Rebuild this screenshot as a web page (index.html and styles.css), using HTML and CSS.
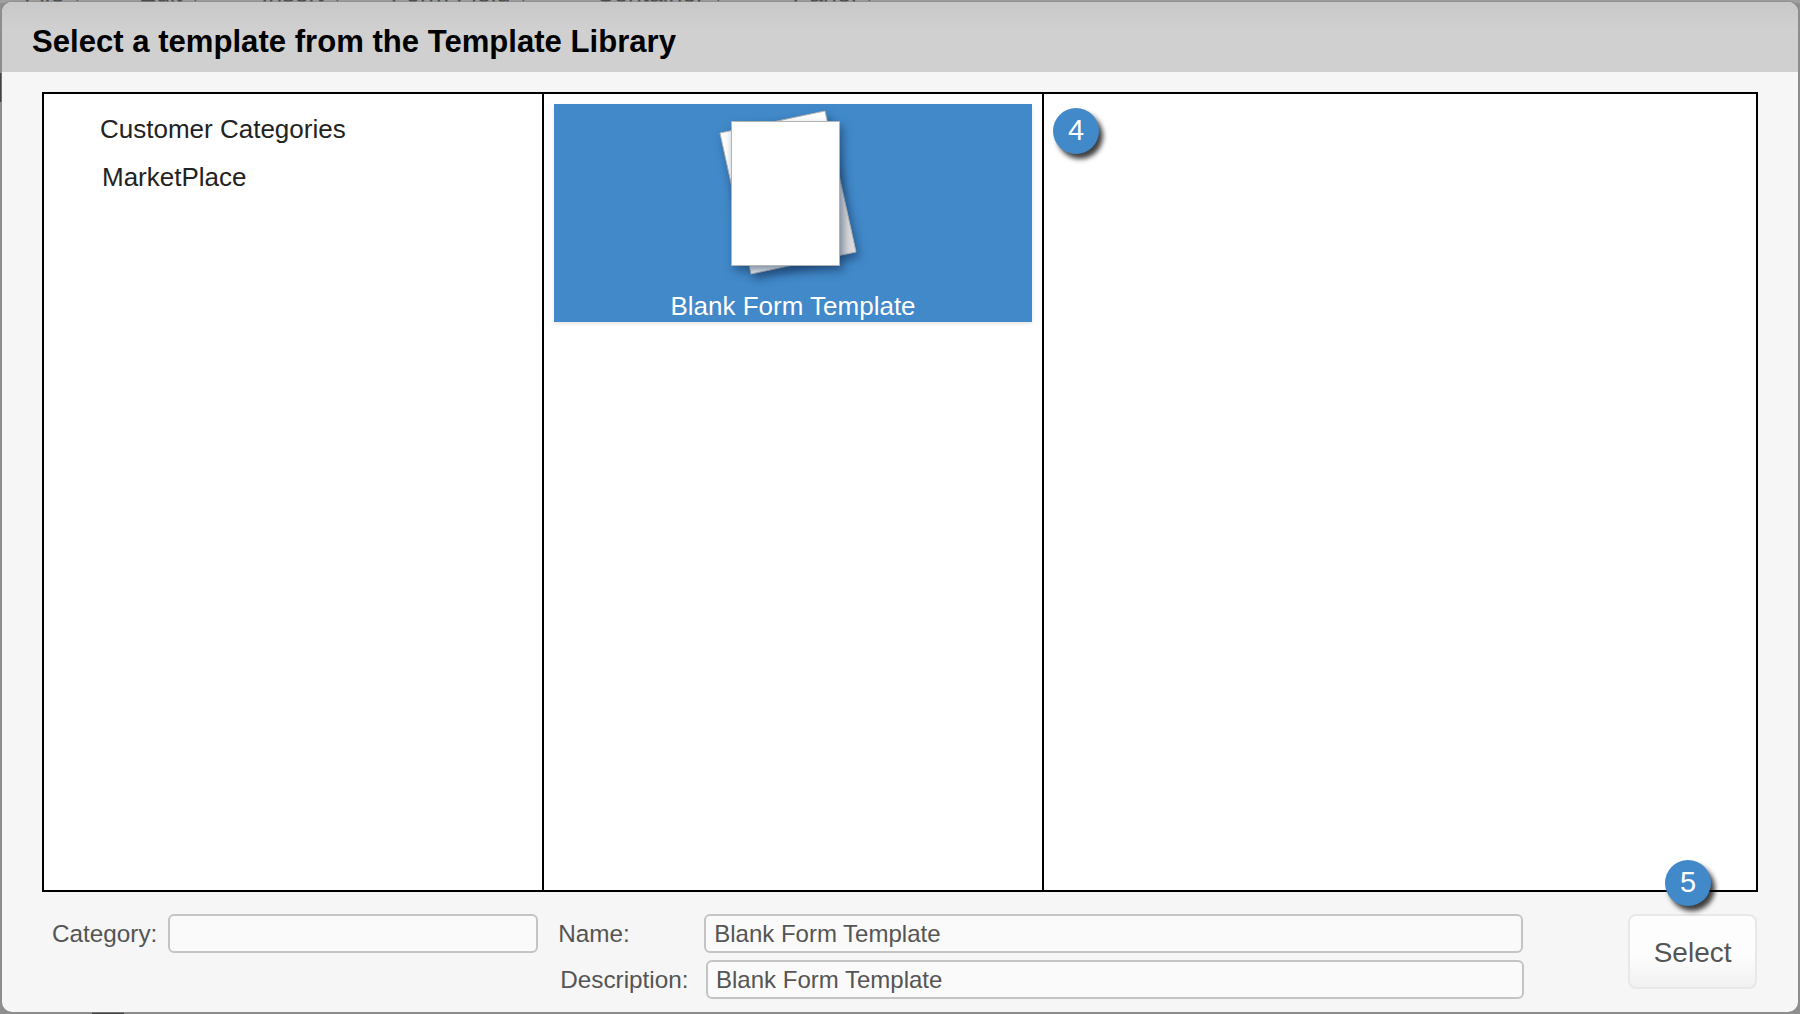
FILE: index.html

```html
<!DOCTYPE html>
<html lang="en">
<head>
    <meta charset="UTF-8">
    <title>Select a template</title>
    <link rel="stylesheet" href="styles.css">
</head>
<body>
    <div class="menubar">
        <span class="menu-file">File ▾</span>
        <span class="menu-edit">Edit ▾</span>
        <span class="menu-insert">Insert ▾</span>
        <span class="menu-field">Form Field ▾</span>
        <span class="menu-container">Container ▾</span>
        <span class="menu-panel">Panel ▾</span>
    </div>
    <div class="backdrop-mark mark-left"></div>
    <div class="backdrop-mark mark-bottom"></div>

    <div class="modal">
        <div class="modal-header">Select a template from the Template Library</div>

        <div class="panels">
            <div class="panel panel-categories">
                <div class="category">Customer Categories</div>
                <div class="category category-second">MarketPlace</div>
            </div>
            <div class="panel panel-templates">
                <div class="template-card">
                    <svg class="template-icon" width="478" height="186" viewBox="0 0 478 186">
                        <defs>
                            <linearGradient id="backPage" x1="0" y1="0" x2="1" y2="0.5">
                                <stop offset="0.7" stop-color="#ffffff"/>
                                <stop offset="1" stop-color="#dcdcdc"/>
                            </linearGradient>
                        </defs>
                        <polygon class="page" points="166,29 271,7 302,148 197,170" fill="url(#backPage)"/>
                        <rect class="page" x="177.500" y="17.500" width="108" height="144" fill="#ffffff"/>
                    </svg>
                    <div class="template-name">Blank Form Template</div>
                </div>
            </div>
            <div class="panel panel-preview">
                <div class="badge badge-preview">4</div>
            </div>
        </div>

        <div class="modal-footer">
            <div class="field-category">
                <label class="label-category" for="category">Category:</label>
                <input class="text-input input-category" type="text" id="category">
            </div>
            <div class="field-details">
                <div class="detail-row">
                    <label class="label-name" for="name">Name:</label>
                    <input class="text-input input-name" type="text" id="name" value="Blank Form Template">
                </div>
                <div class="detail-row detail-row-second">
                    <label class="label-description" for="description">Description:</label>
                    <input class="text-input input-description" type="text" id="description" value="Blank Form Template">
                </div>
            </div>
            <button class="select-button">Select</button>
            <div class="badge badge-select">5</div>
        </div>
    </div>
</body>
</html>
```

FILE: styles.css

```css
* {
    box-sizing: border-box;
}
html, body {
    margin: 0;
    height: 100%;
}
body {
    position: relative;
    height: 1014px;
    overflow: hidden;
    background-color: #8f8f8f;
    font-family: "Liberation Sans", Arial, sans-serif;
}
.menubar {
    display: flex;
    height: 3px;
    overflow: hidden;
    background-color: #a0a0a0;
    padding-left: 24px;
    font-size: 25px;
    line-height: 3px;
    color: #333;
}
.menubar span {
    display: block;
    margin-top: -8px;
    white-space: nowrap;
}
.menu-edit { margin-left: 55px; }
.menu-insert { margin-left: 59px; }
.menu-field { margin-left: 47px; }
.menu-container { margin-left: 66px; }
.menu-panel { margin-left: 68px; }

.backdrop-mark {
    position: absolute;
    background-color: #2c2c2c;
}
.mark-left {
    top: 73px;
    left: 0;
    width: 2px;
    height: 29px;
}
.mark-bottom {
    top: 1012px;
    left: 92px;
    width: 32px;
    height: 2px;
}

.modal {
    position: absolute;
    top: 2px;
    left: 2px;
    width: 1796px;
    height: 1010px;
    border-radius: 10px;
    overflow: hidden;
    background-color: #f6f6f6;
    box-shadow: 0 0 2px 1px #8c8c8c;
}
.modal-header {
    height: 70px;
    padding: 18px 0 0 30px;
    background: linear-gradient(#c8c8c8, #d0d0d0 40%);
    color: #000;
    font-size: 31.100px;
    font-weight: bold;
    line-height: 44px;
}
.panels {
    display: flex;
    height: 800px;
    margin: 20px 40px 0 40px;
    border: 2px solid #000;
    background-color: #fff;
}
.panel {
    height: 100%;
}
.panel-categories {
    width: 500px;
    padding: 16px 0 0 56px;
    border-right: 2px solid #000;
    color: #222;
    font-size: 26px;
}
.category {
    height: 48px;
    line-height: 38px;
}
.category-second {
    padding-left: 2px;
}
.panel-templates {
    width: 500px;
    padding: 10px;
    border-right: 2px solid #000;
}
.panel-preview {
    flex: 1;
    padding: 14px 0 0 9px;
}
.template-card {
    width: 478px;
    height: 218px;
    background-color: #4189c9;
    box-shadow: 0 2px 4px rgba(0,0,0,0.1);
}
.template-icon {
    display: block;
}
.page {
    stroke: #b4b4b4;
    stroke-width: 1;
    filter: drop-shadow(3px 5px 5px rgba(20,50,90,0.55));
}
.template-name {
    color: #fff;
    font-size: 26px;
    line-height: 32px;
    text-align: center;
}
.badge {
    width: 46px;
    height: 46px;
    border-radius: 50%;
    background-color: #4189c9;
    box-shadow: 4px 5px 5px rgba(0,0,0,0.75);
    color: #fff;
    font-size: 29px;
    line-height: 45px;
    text-align: center;
}
.badge-select {
    position: absolute;
    top: 858px;
    left: 1663px;
}
.modal-footer {
    display: flex;
    align-items: flex-start;
    padding: 22px 41px 0 50px;
    color: #555;
    font-size: 24.300px;
}
.field-category {
    display: flex;
    align-items: center;
    width: 507px;
}
.label-category {
    width: 116px;
}
.text-input {
    height: 39px;
    padding: 0 8px;
    border: 2px solid #c4c4c4;
    border-radius: 6px;
    background-color: #fafafa;
    color: #555;
    font-family: inherit;
    font-size: 24px;
}
.input-category {
    width: 370px;
}
.field-details {
    width: 966px;
}
.detail-row {
    display: flex;
    align-items: center;
}
.detail-row-second {
    margin-top: 7px;
    padding-left: 2px;
}
.label-name {
    width: 146px;
}
.label-description {
    width: 146px;
}
.input-name {
    width: 819px;
}
.input-description {
    width: 819px;
}
.select-button {
    width: 129px;
    height: 75px;
    margin-left: 104px;
    padding-top: 4px;
    border: 2px solid #e8e8e8;
    border-radius: 8px;
    background: linear-gradient(#fdfdfd 55%, #f1f1f1);
    color: #555;
    font-family: inherit;
    font-size: 28px;
}
```
